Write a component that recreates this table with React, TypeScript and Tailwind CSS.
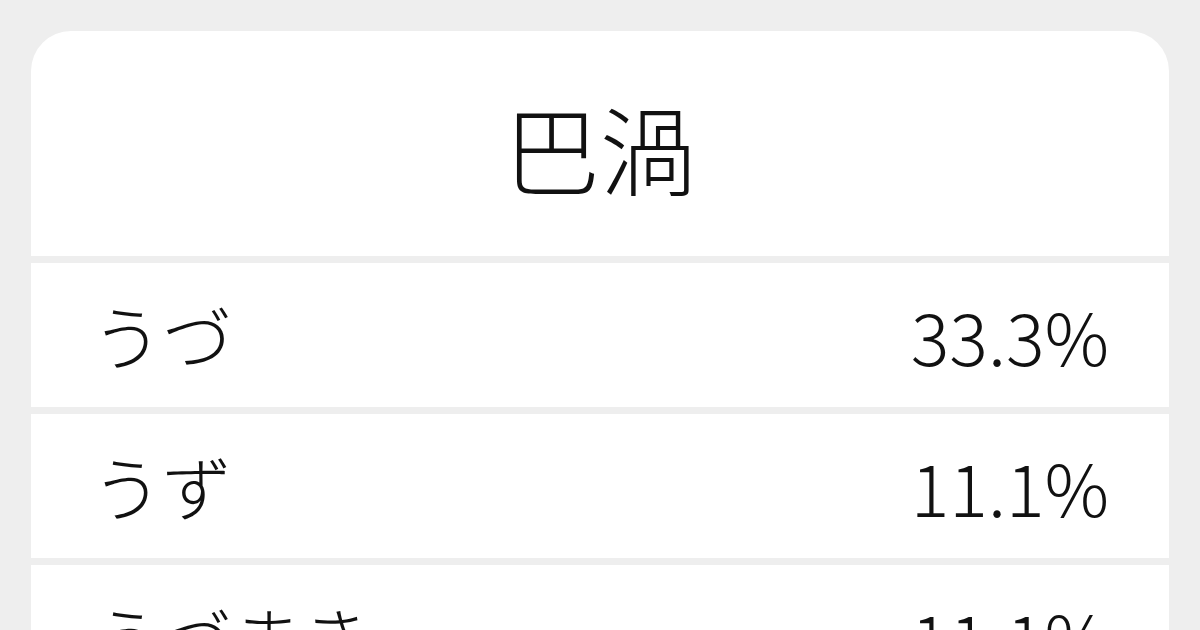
export default function App() {
  const rows = [
    { k: "うづ", v: "33.3%" },
    { k: "うず", v: "11.1%" },
    { k: "うづまき", v: "11.1%" },
  ];
  return (
    <div
      className="w-[1200px] h-[630px] overflow-hidden bg-[#eeeeee] pt-[31px] px-[31px]"
      style={{ fontFamily: '"Noto Sans CJK JP", "Noto Sans", sans-serif' }}
    >
      <div className="flex flex-col gap-[7px] rounded-t-[40px] overflow-hidden">
        <div className="h-[225px] bg-white flex items-center justify-center pt-[6px]">
          <span className="text-[96px] leading-none font-light text-[#111]">巴渦</span>
        </div>
        {rows.map((r, i) => (
          <div key={i} className="h-[144px] shrink-0 bg-white flex items-center justify-between pl-[61px] pr-[60px]">
            <span className="text-[70px] leading-none font-light text-[#111]">{r.k}</span>
            <span className="text-[72px] leading-none font-light text-[#111]">{r.v}</span>
          </div>
        ))}
      </div>
    </div>
  );
}
